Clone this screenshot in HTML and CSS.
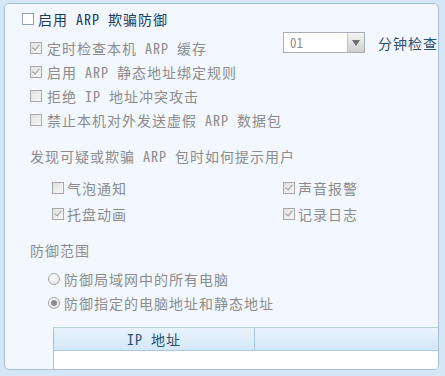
FILE: index.html
```html
<html>
<head>
    <meta http-equiv="content-type" content="text/html;charset=utf-8"/>
    <title>ARP 防御</title>
    <link rel="stylesheet" href="styles.css">
</head>
<body>
<div class="panel">
    <div class="title"><span class="cb"></span>启用 ARP 欺骗防御</div>

    <div class="opts">
        <div class="row">
            <div class="left"><span class="cb on"></span>定时检查本机 ARP 缓存</div>
            <div class="timer">
                <div class="select"><span class="val">01</span><span class="arrow"></span></div>
                <span class="unit">分钟检查</span>
            </div>
        </div>
        <div class="row"><span class="cb on"></span>启用 ARP 静态地址绑定规则</div>
        <div class="row"><span class="cb"></span>拒绝 IP 地址冲突攻击</div>
        <div class="row"><span class="cb"></span>禁止本机对外发送虚假 ARP 数据包</div>
    </div>

    <div class="label sec1">发现可疑或欺骗 ARP 包时如何提示用户</div>
    <div class="alerts">
        <div class="row"><span class="cb"></span>气泡通知</div>
        <div class="row"><span class="cb on"></span>声音报警</div>
        <div class="row"><span class="cb on"></span>托盘动画</div>
        <div class="row"><span class="cb on"></span>记录日志</div>
    </div>

    <div class="label sec2">防御范围</div>
    <div class="radios">
        <div class="row"><span class="rd"></span>防御局域网中的所有电脑</div>
        <div class="row"><span class="rd on"></span>防御指定的电脑地址和静态地址</div>
    </div>

    <div class="grid">
        <div class="ghead">
            <div class="col1">IP 地址</div>
            <div class="col2"></div>
        </div>
        <div class="gbody"></div>
    </div>
</div>
</body>
</html>
```

FILE: styles.css
```css
@charset "utf-8";

html, body { margin:0; padding:0; background:#d5e7f7; overflow:hidden;}
body {
    width:445px; height:376px;
    font-family:"Noto Sans Mono CJK SC", "Noto Sans CJK SC", sans-serif;
    font-size:14px; letter-spacing:1px; color:#8c8c8c;}

.panel {
    box-sizing:border-box;
    margin:3px 0 0 4px;
    width:435px; height:367px;
    padding-top:3px;
    background:#f2f8fd;
    border:1px solid #a6c0d6;
    border-radius:5px;
    overflow:hidden;}

.title { height:24px; line-height:24px; padding-left:17px; color:#1d3b5c; display:flex; align-items:center; white-space:nowrap;}

.row { height:24px; display:flex; align-items:center; white-space:nowrap;}

/* checkbox */
.cb {
    box-sizing:border-box;
    width:12px; height:12px;
    margin-right:5px;
    border:1px solid #a8a8a8;
    background:linear-gradient(135deg, #e0e0e0, #f8f8f8);
    position:relative;
    flex:none;}
.title .cb { border-color:#8ea3b8; background:#fff; margin-right:4px;}
.cb.on:after {
    content:"";
    position:absolute;
    left:3px; top:0;
    width:3px; height:6px;
    border:solid #9a9a9a;
    border-width:0 1.5px 1.5px 0;
    transform:rotate(40deg);}

.opts { margin-top:5px; padding-left:25px;}
.opts .left { width:253px; display:flex; align-items:center;}
.timer { display:flex; align-items:center; align-self:flex-start; margin-top:-4px;}
.select {
    box-sizing:border-box;
    width:82px; height:21px;
    border:1px solid #a8aeb6;
    background:#fff;
    display:flex; align-items:stretch;}
.select .val { flex:1; padding-left:6px; line-height:19px; font-size:13px; color:#8c8c8c; letter-spacing:0;}
.select .arrow {
    width:16px;
    border-left:1px solid #c3c3c3;
    background:linear-gradient(#f4f4f4, #cfcfcf);
    position:relative;}
.select .arrow:after {
    content:"";
    position:absolute;
    left:4px; top:7px;
    border-style:solid;
    border-width:6px 4px 0 4px;
    border-color:#6e6e6e transparent transparent transparent;}
.unit { margin-left:13px; color:#2b4f70;}

.label { height:24px; line-height:24px; padding-left:25px; white-space:nowrap;}
.sec1 { margin-top:12px;}
.sec2 { margin-top:11px;}

.alerts {
    margin-top:7px;
    padding-left:47px;
    display:grid;
    grid-template-columns:231px auto;}
.alerts .row { height:26px;}
.alerts .cb { margin-right:3px;}

.radios { margin-top:5px; padding-left:43px;}
.rd {
    box-sizing:border-box;
    width:12px; height:12px;
    margin-right:4px;
    border:1px solid #a8a8a8;
    border-radius:50%;
    background:radial-gradient(circle at 40% 35%, #fff, #dcdcdc);
    position:relative;
    flex:none;}
.rd.on:after {
    content:"";
    position:absolute;
    left:2px; top:2px;
    width:6px; height:6px;
    border-radius:50%;
    background:#8c8c8c;}

.grid {
    margin:12px 0 0 48px;
    width:420px;
    border-left:1px solid #a9bfd2;
    border-top:1px solid #b9d0e2;
    background:#fff;
    height:60px;}
.ghead {
    height:22px;
    display:flex;
    background:linear-gradient(#e8f3fc, #d3e7f8);
    border-bottom:1px solid #a8c9e3;}
.ghead .col1 {
    width:200px;
    border-right:1px solid #a9c4d8;
    text-align:center;
    line-height:22px;
    color:#2b4f70;}
.ghead .col2 { flex:1;}
```
